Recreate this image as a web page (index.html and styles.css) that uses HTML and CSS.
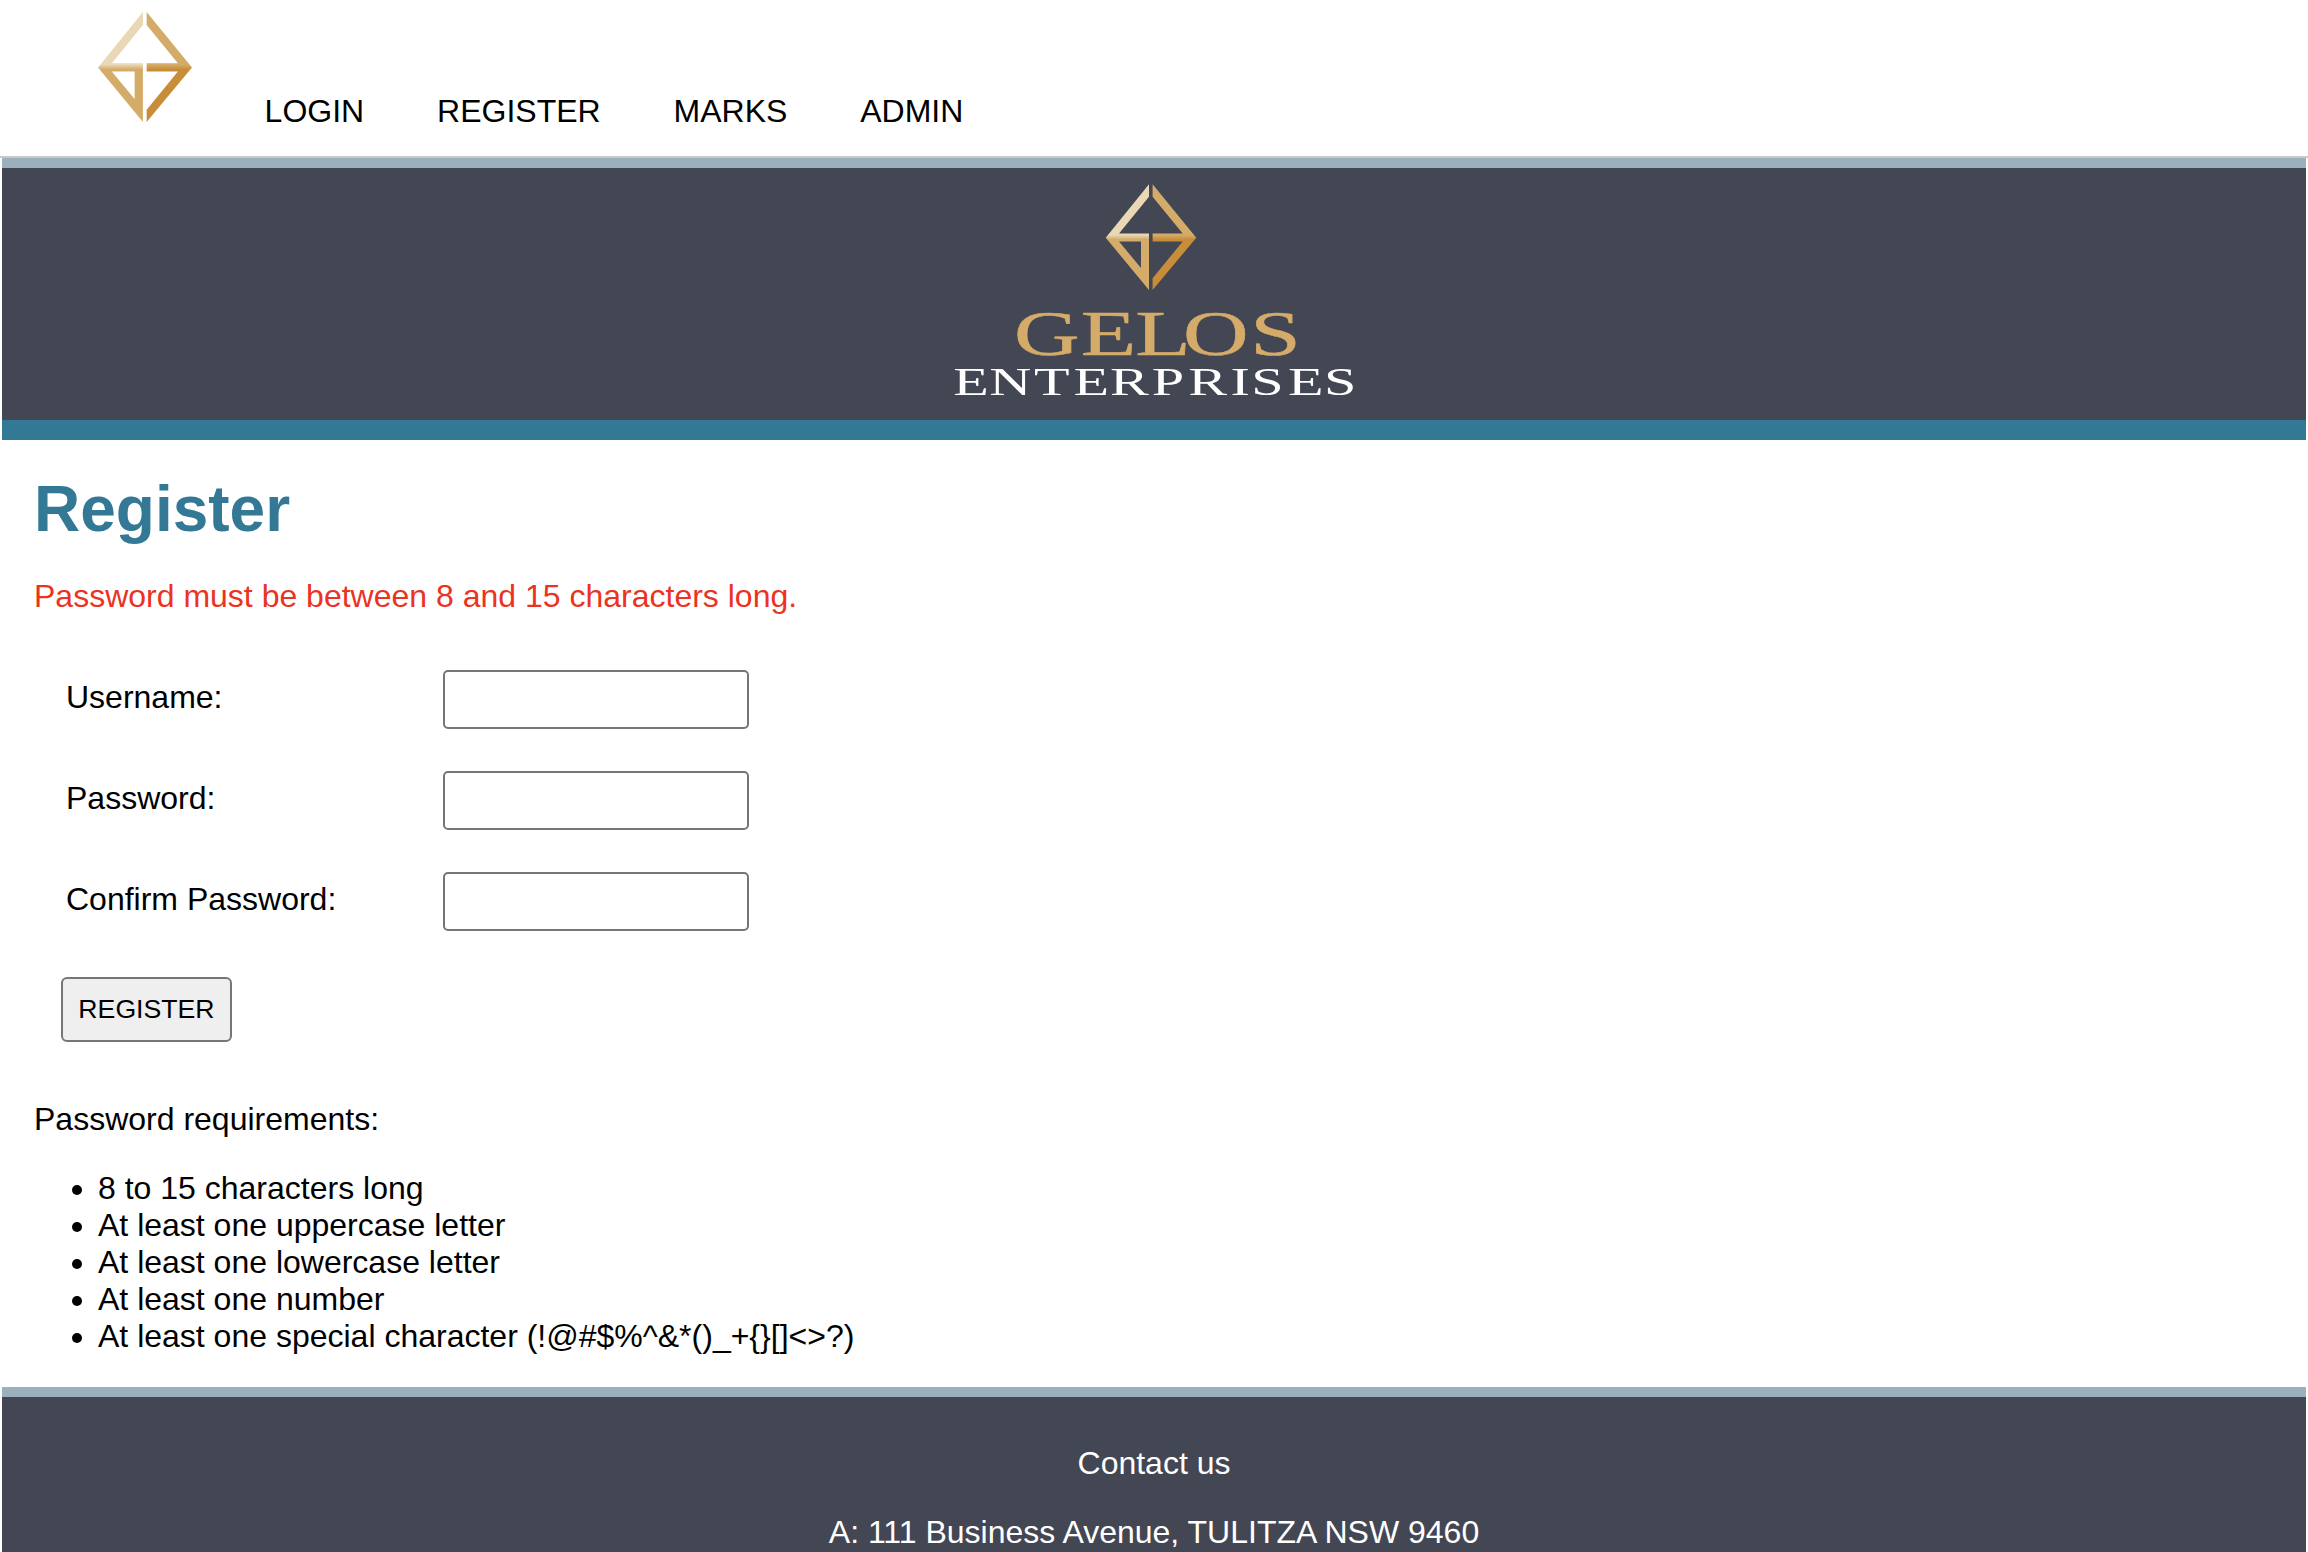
FILE: index.html
```
<!DOCTYPE html>
<html lang="en">
<head>
<meta charset="utf-8">
<title>Register - Gelos Enterprises</title>
<link rel="stylesheet" href="styles.css">
</head>
<body>
<nav class="topbar">
  <svg class="topbar-logo" viewBox="151.7 0.3 90.6 105.7" preserveAspectRatio="none" role="img" aria-label="Gelos">
    <defs>
      <linearGradient id="goldLeft" gradientUnits="userSpaceOnUse" x1="0" y1="51" x2="0" y2="55.5">
        <stop offset="0" stop-color="#ead7b5"/><stop offset="1" stop-color="#d5ab69"/>
      </linearGradient>
      <linearGradient id="goldRight" gradientUnits="userSpaceOnUse" x1="0" y1="51" x2="0" y2="55.5">
        <stop offset="0" stop-color="#d5ab69"/><stop offset="1" stop-color="#c88d39"/>
      </linearGradient>
      <g id="diamond">
        <path fill="url(#goldLeft)" fill-rule="evenodd" d="M195 0.3V12.7L165 49.6H195V106L151.7 53.7ZM165 57.5L187 84V57.5Z"/>
        <path fill="url(#goldRight)" d="M198.6 0.3L242.3 53.7L198.6 106V94.3L228.7 57.5H198.6V49.6H228.7L198.6 12.7Z"/>
      </g>
    </defs>
    <use href="#diamond"/>
  </svg>
  <ul class="menu">
    <li><a href="#">LOGIN</a></li>
    <li><a href="#">REGISTER</a></li>
    <li><a href="#">MARKS</a></li>
    <li><a href="#">ADMIN</a></li>
  </ul>
</nav>
<header class="banner">
  <svg class="banner-logo" viewBox="0 0 400 212">
    <use href="#diamond"/>
    <text class="brand-name" transform="scale(1.42 1)" x="42.2 89.3 127.7 161.3 208.6" y="171">GELOS</text>
    <text class="brand-kind" transform="scale(1.42 1)" x="-0.5 24.8 56.4 84.2 109.9 139.2 165 194.8 209.4 235.2 260.6" y="211.5">ENTERPRISES</text>
  </svg>
</header>
<main class="content">
  <h1>Register</h1>
  <p class="error">Password must be between 8 and 15 characters long.</p>
  <form class="form">
    <label for="username">Username:</label><input id="username" type="text">
    <label for="password">Password:</label><input id="password" type="password">
    <label for="confirm">Confirm Password:</label><input id="confirm" type="password">
    <button type="button">REGISTER</button>
  </form>
  <p class="rules-title">Password requirements:</p>
  <ul class="rules">
    <li>8 to 15 characters long</li>
    <li>At least one uppercase letter</li>
    <li>At least one lowercase letter</li>
    <li>At least one number</li>
    <li>At least one special character (!@#$%^&amp;*()_+{}[]&lt;&gt;?)</li>
  </ul>
</main>
<footer class="footer">
  <p>Contact us</p>
  <p>A: 111 Business Avenue, TULITZA NSW 9460</p>
</footer>
</body>
</html>
```
FILE: styles.css
```
* {
  box-sizing: border-box;
}

html {
  overflow: hidden;
}

body {
  margin: 0;
  height: 1552px;
  overflow: hidden;
  background: #fff;
  color: #000;
  font: 32px/37px "Liberation Sans", Arial, sans-serif;
}

.topbar {
  display: flex;
  align-items: flex-start;
  gap: 72.6px;
  height: 158px;
  padding: 12px 0 0 98px;
  border-bottom: 2px solid #c9c9ca;
}

.topbar-logo {
  width: 94px;
  height: 110px;
}

.menu {
  display: flex;
  gap: 72.9px;
  margin: 0;
  padding: 81px 0 0;
  list-style: none;
}

.menu a {
  color: #000;
  text-decoration: none;
}

.banner {
  height: 282px;
  margin: 0 2px;
  padding-top: 16px;
  border-top: 10px solid #9ab0bc;
  border-bottom: 20px solid #337996;
  background: #434653;
  text-align: center;
}

.banner-logo {
  display: block;
  width: 400px;
  height: 212px;
  margin: 0 auto;
  overflow: visible;
}

.brand-name,
.brand-kind {
  font-family: "Liberation Serif", "Times New Roman", serif;
}

.brand-name {
  font-size: 64px;
  fill: #d5ab69;
  stroke: #d5ab69;
  stroke-width: 0.5px;
}

.brand-kind {
  font-size: 41px;
  fill: #fff;
}

.content {
  height: 947px;
  padding: 32px 34px 0;
}

h1 {
  margin: 0 0 28px;
  color: #337996;
  font-size: 64px;
  line-height: 74px;
}

p {
  margin: 0;
}

.error {
  padding-top: 4px;
  color: #eb3323;
}

.form {
  display: grid;
  grid-template-columns: 377px 306px;
  grid-auto-rows: 59px;
  row-gap: 42px;
  margin: 55px 0 0 32px;
}

.form label {
  padding-top: 9px;
}

.form input {
  width: 306px;
  height: 59px;
  margin: 0;
  padding: 0 8px;
  border: 2px solid #767676;
  border-radius: 5px;
  background: #fff;
  font: inherit;
}

.form button {
  width: 171px;
  height: 65px;
  margin: 4px 0 0 -5px;
  padding: 0 0 2px;
  border: 2px solid #767676;
  border-radius: 6px;
  background: #efefef;
  color: #000;
  font: 26.667px/30px "Liberation Sans", Arial, sans-serif;
}

.rules-title {
  margin-top: 69px;
}

.rules {
  margin: 32px 0 0;
  padding-left: 64px;
}

.footer {
  height: 165px;
  margin: 0 2px;
  padding-top: 48px;
  border-top: 10px solid #9ab0bc;
  background: #434653;
  color: #fff;
  text-align: center;
}

.footer p + p {
  margin-top: 32px;
}
```
